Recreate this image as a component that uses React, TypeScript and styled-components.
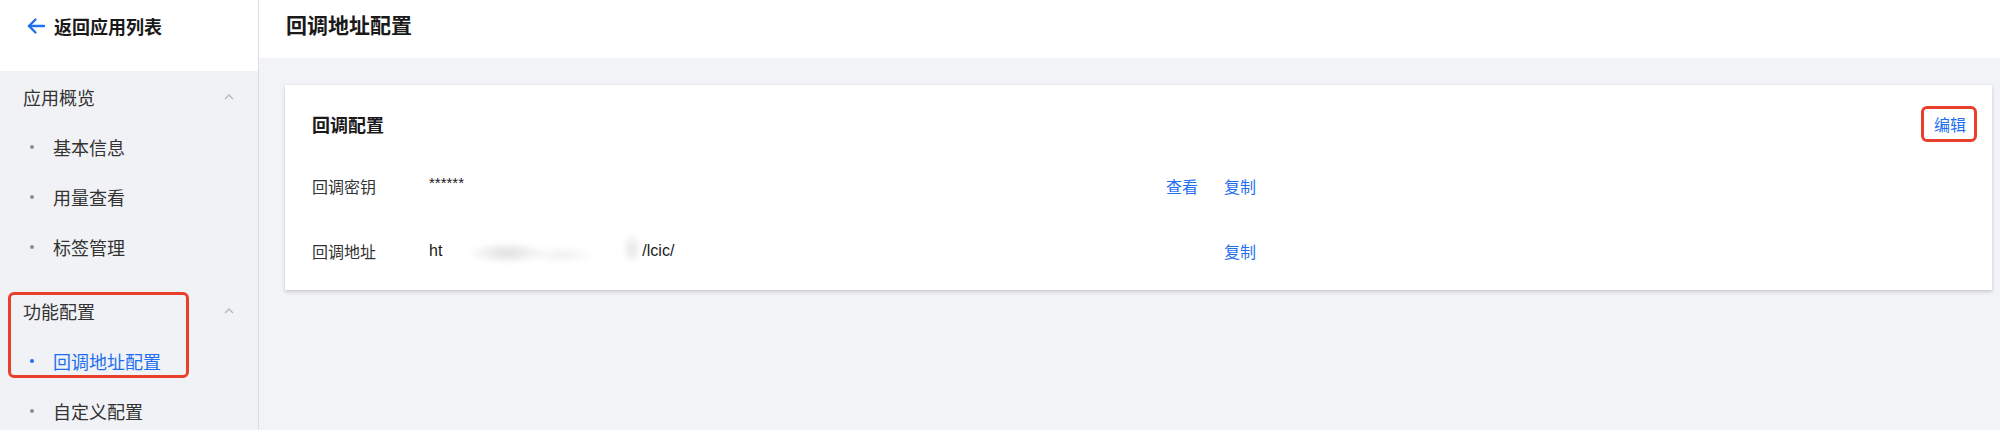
import React from "react";
import styled, { createGlobalStyle } from "styled-components";

const Global = createGlobalStyle`
  html, body { margin: 0; padding: 0; }
  body {
    font-family: "Liberation Sans", "Noto Sans CJK SC", sans-serif;
    color: #1f1f1f;
    background: #f2f3f7;
  }
  * { box-sizing: border-box; }
`;

const Layout = styled.div`
  display: flex;
  height: 430px;
  overflow: hidden;
`;

const Sidebar = styled.aside`
  width: 259px;
  flex-shrink: 0;
  background: #f1f2f6;
  border-right: 1px solid #dcdee4;
`;

const SideHeader = styled.div`
  height: 71px;
  background: #fff;
  padding-left: 26px;
`;

const BackLink = styled.div`
  height: 51px;
  display: flex;
  align-items: center;
  gap: 8px;
  font-size: 18px;
  font-weight: 700;
  color: #1a1a1a;
`;

const Group = styled.div<{ $top?: number }>`
  position: relative;
  margin-top: ${(p) => p.$top ?? 0}px;
`;

const GroupTitle = styled.div`
  height: 51px;
  display: flex;
  align-items: center;
  justify-content: space-between;
  padding: 0 24px 0 23px;
  font-size: 18px;
  color: #333;
`;

const Item = styled.div<{ $active?: boolean }>`
  height: 50px;
  display: flex;
  align-items: center;
  padding-left: 30px;
  font-size: 18px;
  color: ${(p) => (p.$active ? "#1f6ff0" : "#333")};
`;

const Dot = styled.span<{ $active?: boolean }>`
  width: 4px;
  height: 4px;
  border-radius: 50%;
  background: ${(p) => (p.$active ? "#1f6ff0" : "#8a8d94")};
  margin-right: 19px;
`;

const Highlight = styled.div<{ $l: number; $t: number; $w: number; $h: number }>`
  position: absolute;
  left: ${(p) => p.$l}px;
  top: ${(p) => p.$t}px;
  width: ${(p) => p.$w}px;
  height: ${(p) => p.$h}px;
  border: 3px solid #e8402c;
  border-radius: 6px;
  pointer-events: none;
`;

const Main = styled.main`
  flex: 1;
  display: flex;
  flex-direction: column;
  background: #f2f3f7;
`;

const PageHeader = styled.header`
  height: 58px;
  background: #fff;
  padding-left: 27px;
`;

const PageTitle = styled.h1`
  margin: 0;
  line-height: 51px;
  font-size: 21px;
  font-weight: 700;
  color: #1a1a1a;
`;

const Content = styled.div`
  padding: 27px 8px 0 26px;
`;

const Card = styled.section`
  position: relative;
  background: #fff;
  height: 205px;
  box-shadow: 0 2px 4px rgba(0, 0, 0, 0.16), 0 0 1px rgba(0, 0, 0, 0.08);
  padding: 23px 26px 0 27px;
`;

const CardHead = styled.div`
  display: flex;
  align-items: center;
  justify-content: space-between;
  height: 32px;
  margin-bottom: 13px;
`;

const CardTitle = styled.h2`
  margin: 0;
  font-size: 18px;
  font-weight: 700;
  color: #1a1a1a;
`;

const Link = styled.a`
  font-size: 16px;
  color: #1f6ff0;
  cursor: pointer;
  text-decoration: none;
`;

const Row = styled.div`
  display: grid;
  grid-template-columns: 117px 737px 58px auto;
  align-items: center;
  height: 65px;
  font-size: 16px;
`;

const Label = styled.span`
  color: #333;
`;

const Value = styled.span`
  display: flex;
  align-items: center;
  color: #1a1a1a;
`;

const Stars = styled.span`
  font-size: 15px;
  position: relative;
  top: -3px;
`;

const Blurred = styled.span`
  display: inline-block;
  width: 201px;
  height: 40px;
  margin-left: -1px;
  background:
    radial-gradient(ellipse 40px 11px at 33% 55%, rgba(0, 0, 0, 0.13), transparent),
    radial-gradient(ellipse 34px 9px at 60% 60%, rgba(0, 0, 0, 0.06), transparent),
    radial-gradient(ellipse 10px 16px at 95% 45%, rgba(0, 0, 0, 0.1), transparent);
  filter: blur(2px);
`;

const Chevron = () => (
  <svg width="10" height="6" viewBox="0 0 10 6">
    <polyline points="1,5 5,1 9,5" fill="none" stroke="#b4b7bd" strokeWidth="1.3" />
  </svg>
);

const ArrowLeft = () => (
  <svg width="20" height="18" viewBox="0 0 20 18">
    <line x1="3" y1="9" x2="18" y2="9" stroke="#1f6ff0" strokeWidth="2.4" strokeLinecap="round" />
    <polyline
      points="9.5,2.5 3,9 9.5,15.5"
      fill="none"
      stroke="#1f6ff0"
      strokeWidth="2.4"
      strokeLinecap="round"
      strokeLinejoin="round"
    />
  </svg>
);

export default function App() {
  return (
    <>
      <Global />
      <Layout>
        <Sidebar>
          <SideHeader>
            <BackLink>
              <ArrowLeft />
              返回应用列表
            </BackLink>
          </SideHeader>
          <Group>
            <GroupTitle>
              应用概览
              <Chevron />
            </GroupTitle>
            <Item><Dot />基本信息</Item>
            <Item><Dot />用量查看</Item>
            <Item><Dot />标签管理</Item>
          </Group>
          <Group $top={13}>
            <GroupTitle>
              功能配置
              <Chevron />
            </GroupTitle>
            <Item $active><Dot $active />回调地址配置</Item>
            <Highlight $l={8} $t={7} $w={181} $h={86} />
            <Item><Dot />自定义配置</Item>
          </Group>
        </Sidebar>
        <Main>
          <PageHeader>
            <PageTitle>回调地址配置</PageTitle>
          </PageHeader>
          <Content>
            <Card>
              <CardHead>
                <CardTitle>回调配置</CardTitle>
                <Link>编辑</Link>
              </CardHead>
              <Highlight $l={1636} $t={21} $w={56} $h={36} />
              <Row>
                <Label>回调密钥</Label>
                <Value><Stars>******</Stars></Value>
                <Link>查看</Link>
                <Link>复制</Link>
              </Row>
              <Row>
                <Label>回调地址</Label>
                <Value>
                  ht<Blurred />/lcic/
                </Value>
                <span />
                <Link>复制</Link>
              </Row>
            </Card>
          </Content>
        </Main>
      </Layout>
    </>
  );
}
